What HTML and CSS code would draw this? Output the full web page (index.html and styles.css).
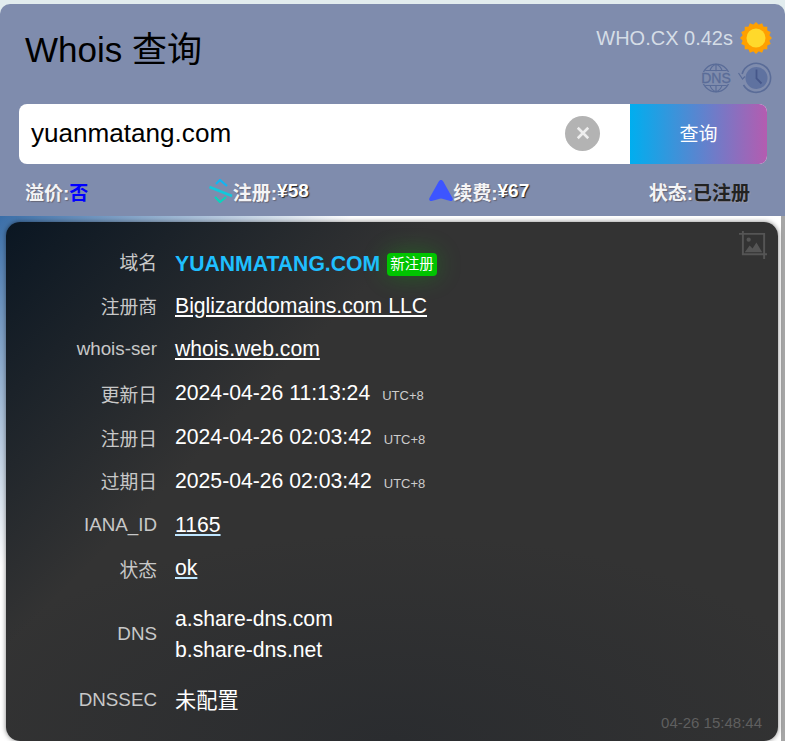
FILE: index.html
```html
<!DOCTYPE html>
<html lang="zh-CN">
<head>
    <meta charset="UTF-8">
    <meta name="viewport" content="width=device-width, initial-scale=1.0">
    <title>Whois 查询</title>
    <link rel="stylesheet" href="styles.css">
</head>
<body>
    <header class="top">
        <div class="top-row">
            <h1 class="title">Whois 查询</h1>
            <div class="tools">
                <div class="tools-line">
                    <span class="site-time">WHO.CX 0.42s</span>
                    <svg class="icon-32" viewBox="0 0 32 32">
                        <g fill="#ffa000">
                            <rect x="4.700" y="4.700" width="22.600" height="22.600"/>
                            <rect x="4.700" y="4.700" width="22.600" height="22.600" transform="rotate(22.5 16 16)"/>
                            <rect x="4.700" y="4.700" width="22.600" height="22.600" transform="rotate(45 16 16)"/>
                            <rect x="4.700" y="4.700" width="22.600" height="22.600" transform="rotate(67.5 16 16)"/>
                        </g>
                        <circle cx="16" cy="16" r="9.500" fill="#ffd92b"/>
                    </svg>
                </div>
                <div class="tools-line icons-line">
                    <svg class="icon-30" viewBox="0 0 30 30" fill="none" stroke="#5a6c98" stroke-width="1.200">
                        <circle cx="15" cy="15" r="13.800"/>
                        <path d="M15 1.200v7M15 22v6.800M9 8C9.500 5 11.500 2.500 15 1.200 18.500 2.500 20.500 5 21 8M9 22c.5 3 2.500 5.500 6 6.800 3.500-1.300 5.500-3.800 6-6.800M4.200 7.500h21.600M4.200 22.500h21.600"/>
                        <rect x="0" y="9" width="30" height="12" fill="#7f8cad" stroke="none"/>
                        <text x="15" y="20" class="dns-text">DNS</text>
                    </svg>
                    <svg class="icon-32 clock" viewBox="0 0 32 32" fill="none">
                        <path d="M2.100 12A14.500 14.500 0 1 1 3.500 23" stroke="#5a6c98" stroke-width="1.600"/>
                        <path d="M-1.500 11l4 6 2.500-2.500" stroke="#5a6c98" stroke-width="1.200"/>
                        <circle cx="16.500" cy="16" r="11" fill="#5f72a0"/>
                        <path d="M16.500 7.500v9l5 5" stroke="#46578a" stroke-width="1.800"/>
                    </svg>
                </div>
            </div>
        </div>

        <form class="search">
            <span class="search-text">yuanmatang.com</span>
            <span class="clear">
                <svg class="clear-x" viewBox="0 0 16 16"><path d="M2 2l12 12M14 2L2 14" stroke="#eee" stroke-width="3"/></svg>
            </span>
            <button type="button" class="search-btn">查询</button>
        </form>

        <div class="stats">
            <div class="stat"><span class="stat-label">溢价:</span><span class="val-blue">否</span></div>
            <div class="stat">
                <svg class="stat-icon" viewBox="0 0 24 24" fill="none">
                    <path d="M7 5l4-4 7 6" stroke="#12b5f2" stroke-width="2.200"/>
                    <path d="M.5 8L23 17" stroke="#12c9dc" stroke-width="2.600"/>
                    <path d="M6 18l5 5 6-5" stroke="#0bd3bd" stroke-width="2.200"/>
                </svg>
                <span class="stat-label">注册:</span><span class="val-price">¥58</span>
            </div>
            <div class="stat">
                <svg class="stat-icon" viewBox="0 0 24 24"><path d="M12 1c1 0 1.800.6 2.400 1.700L23.500 19c1 1.800-.4 3.500-2.200 3l-8-2.200a4 4 0 0 0-2.600 0l-8 2.200C.9 22.500-.5 20.800.5 19L9.600 2.700C10.200 1.600 11 1 12 1z" fill="#3d55ff"/></svg>
                <span class="stat-label">续费:</span><span class="val-price">¥67</span>
            </div>
            <div class="stat"><span class="stat-label">状态:</span><span class="val-dark">已注册</span></div>
        </div>
    </header>

    <main class="panel">
        <section class="card">
            <svg class="crop-icon" viewBox="0 0 30 30" fill="none" stroke="#555" stroke-width="2">
                <path d="M4 0v24h25M0 3h26v26"/>
                <circle cx="10" cy="9" r="2.200" fill="#555" stroke="none"/>
                <path d="M6 22l5-7 3 3 4-6 6 10z" fill="#555" stroke="none"/>
            </svg>

            <div class="rows">
                <div class="row">
                    <div class="key">域名</div>
                    <div class="value value-domain"><span class="domain">YUANMATANG.COM</span><span class="badge">新注册</span></div>
                </div>
                <div class="row">
                    <div class="key">注册商</div>
                    <div class="value"><a class="link" href="#">Biglizarddomains.com LLC</a></div>
                </div>
                <div class="row">
                    <div class="key">whois-ser</div>
                    <div class="value"><a class="link" href="#">whois.web.com</a></div>
                </div>
                <div class="row">
                    <div class="key">更新日</div>
                    <div class="value">2024-04-26 11:13:24<span class="tz">UTC+8</span></div>
                </div>
                <div class="row">
                    <div class="key">注册日</div>
                    <div class="value">2024-04-26 02:03:42<span class="tz">UTC+8</span></div>
                </div>
                <div class="row">
                    <div class="key">过期日</div>
                    <div class="value">2025-04-26 02:03:42<span class="tz">UTC+8</span></div>
                </div>
                <div class="row">
                    <div class="key">IANA_ID</div>
                    <div class="value"><a class="link link-blue" href="#">1165</a></div>
                </div>
                <div class="row">
                    <div class="key">状态</div>
                    <div class="value"><a class="link link-blue" href="#">ok</a></div>
                </div>
                <div class="row row-dns">
                    <div class="key">DNS</div>
                    <div class="value">
                        <div class="ns">a.share-dns.com</div>
                        <div class="ns">b.share-dns.net</div>
                    </div>
                </div>
                <div class="row">
                    <div class="key">DNSSEC</div>
                    <div class="value value-cjk">未配置</div>
                </div>
            </div>

            <div class="stamp">04-26 15:48:44</div>
        </section>
    </main>
</body>
</html>
```

FILE: styles.css
```css
html, body {
    margin: 0;
    height: 741px;
    overflow: hidden;
}
body {
    font-family: "Liberation Sans", "Noto Sans CJK SC", sans-serif;
    background: #e2ecee;
    padding-top: 4px;
    box-sizing: border-box;
    display: flex;
    flex-direction: column;
}

/* header */
.top {
    height: 212px;
    flex: none;
    box-sizing: border-box;
    background: #7f8cad;
    border-radius: 10px 10px 0 0;
    padding: 0 18px 0 19px;
}
.top-row {
    height: 100px;
    display: flex;
    justify-content: space-between;
}
.title {
    margin: 22px 0 0 6px;
    font-size: 35px;
    line-height: 48px;
    font-weight: normal;
    color: #000;
}
.tools {
    padding-top: 18px;
}
.tools-line {
    display: flex;
    justify-content: flex-end;
    align-items: center;
    gap: 7px;
    height: 32px;
    margin-right: -5px;
}
.icons-line {
    margin-top: 8px;
    gap: 9px;
}
.site-time {
    font-size: 20px;
    color: #d5dde6;
}
.icon-32 {
    width: 32px;
    height: 32px;
}
.icon-30 {
    width: 30px;
    height: 30px;
}
.clock {
    overflow: visible;
}
.dns-text {
    font-size: 14px;
    text-anchor: middle;
    fill: #5a6c98;
    stroke: #5a6c98;
    stroke-width: .3;
}

/* search box */
.search {
    height: 60px;
    display: flex;
    align-items: center;
    background: #fff;
    border-radius: 8px;
    overflow: hidden;
}
.search-text {
    flex: 1;
    padding: 0 0 2px 12px;
    font-size: 26.100px;
    color: #000;
}
.clear {
    width: 35px;
    height: 35px;
    margin: 0 30px 2px 0;
    border-radius: 50%;
    background: #b3b3b3;
    display: flex;
    align-items: center;
    justify-content: center;
}
.clear-x {
    width: 14px;
    height: 14px;
}
.search-btn {
    width: 137px;
    height: 60px;
    border: 0;
    padding: 0 0 3px;
    font-family: inherit;
    font-size: 19px;
    color: #fff;
    background: linear-gradient(90deg, #00aeef 0%, #b45cb0 100%);
}

/* price row */
.stats {
    height: 52px;
    display: flex;
    justify-content: space-between;
    align-items: center;
    padding: 2px 17px 0 6px;
    box-sizing: border-box;
    font-size: 19px;
    font-weight: bold;
}
.stat {
    display: flex;
    align-items: center;
}
.stat-icon {
    width: 24px;
    height: 24px;
    margin-left: 1px;
}
.stat-label {
    color: #f4f4f6;
    text-shadow: 1px 1px 1px #667;
}
.val-blue {
    color: #00f;
}
.val-price {
    color: #fff;
    text-shadow: 1px 1px 1px #222;
}
.val-dark {
    color: #222;
    text-shadow: 1px 1px 1px #99a;
}

/* result */
.panel {
    flex: 1;
    padding: 6px 3px 0 6px;
    border-right: 4px solid #a6a6a6;
    background: linear-gradient(135deg, #3a6ea8 0%, #fff 27%);
    min-height: 0;
}
.card {
    position: relative;
    height: 519px;
    box-sizing: border-box;
    padding-top: 18px;
    border-radius: 14px;
    background:
        radial-gradient(ellipse 60% 40% at 50% 100%, #2a2c2f, rgba(42, 44, 47, 0)),
        linear-gradient(135deg, #0a1622 0%, #333 33%);
    box-shadow: 0 0 5px rgba(0, 0, 0, .5);
    color: #fff;
}
.rows {
    display: flex;
    flex-direction: column;
}
.row {
    display: grid;
    grid-template-columns: 151px 1fr;
    column-gap: 18px;
    align-items: center;
    min-height: 43.800px;
}
.row-dns {
    min-height: 88px;
}
.key {
    text-align: right;
    font-size: 18.800px;
    color: #c8c8c8;
}
.value {
    font-size: 21.200px;
    color: #fff;
}
.value-domain {
    padding-top: 4px;
}
.value-cjk {
    padding-bottom: 3px;
}
.ns {
    line-height: 31px;
}
.link {
    color: #fff;
}
.link-blue {
    text-decoration-color: #bfe6ff;
}
.domain {
    font-weight: bold;
    color: #1fbfff;
}
.badge {
    display: inline-block;
    margin-left: 7px;
    padding: 0 3px;
    height: 23px;
    line-height: 23px;
    font-size: 14.500px;
    vertical-align: 2px;
    border-radius: 4px;
    background: #00c400;
    box-shadow: 0 0 24px rgba(0, 200, 0, .3);
}
.tz {
    margin-left: 12px;
    font-size: 13px;
    color: #ccc;
}
.crop-icon {
    position: absolute;
    top: 9px;
    right: 10px;
    width: 29px;
    height: 29px;
}
.stamp {
    position: absolute;
    right: 16px;
    bottom: 10px;
    font-size: 15px;
    color: #5f5f5f;
}
```
